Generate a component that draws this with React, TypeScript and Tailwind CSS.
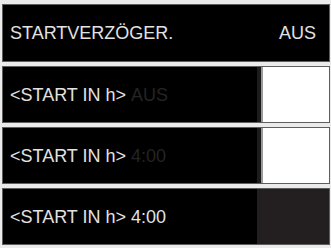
import React from "react";

const font = { fontFamily: '"Liberation Sans", Arial, sans-serif' };

function Row({ value, dim, box }: { value: string; dim: boolean; box: "white" | "dark" }) {
  return (
    <div className="h-[57px] shrink-0 bg-black border border-[#5e5e5e] flex items-stretch">
      <div className="flex-1 flex items-center pl-[7px] text-[18px] leading-none text-[#e2e2e2]">
        <span>&lt;START IN h&gt;</span>
        <span className={dim ? "ml-[5px] text-[#242424]" : "ml-[5px] text-[#e2e2e2]"}>{value}</span>
      </div>
      {box === "white" ? (
        <div className="w-[72px] flex bg-[#1c1c1c] pl-[4px]">
          <div className="flex-1 bg-white border-l-2 border-[#9a9a9a]" />
        </div>
      ) : (
        <div className="w-[72px] bg-[#231f20]" />
      )}
    </div>
  );
}

export default function App() {
  return (
    <div
      className="w-[331px] h-[248px] bg-[#ebebeb] pt-[4px] pl-[2px] pr-[1px] flex flex-col gap-[4px] overflow-hidden"
      style={font}
    >
      <div className="h-[58px] shrink-0 bg-black border border-[#5e5e5e] flex items-center justify-between pl-[7px] pr-[13px] text-[18px] leading-none text-[#e2e2e2]">
        <span>STARTVERZÖGER.</span>
        <span>AUS</span>
      </div>
      <Row value="AUS" dim box="white" />
      <Row value="4:00" dim box="white" />
      <Row value="4:00" dim={false} box="dark" />
    </div>
  );
}
